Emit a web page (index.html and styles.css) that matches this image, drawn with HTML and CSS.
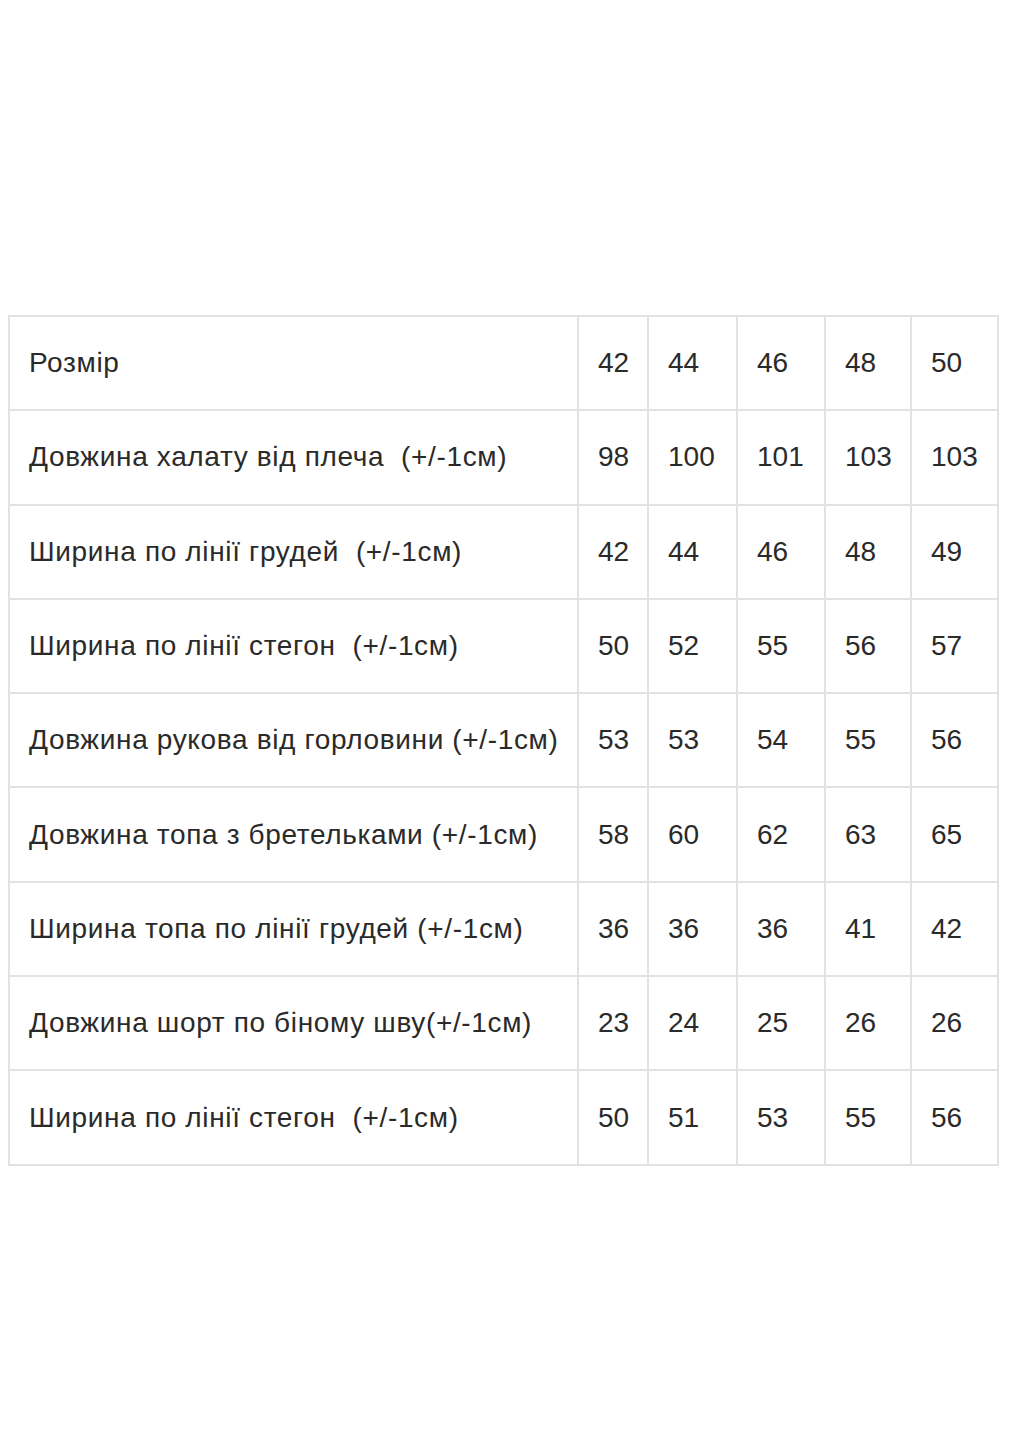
FILE: index.html
```html
<!DOCTYPE html>
<html lang="uk">
<head>
<meta charset="utf-8">
<link rel="stylesheet" href="styles.css">
</head>
<body>
<div class="page">
  <table class="sizes">
    <colgroup>
      <col class="c-label"><col class="c1"><col class="c2"><col class="c3"><col class="c4"><col class="c5">
    </colgroup>
    <tbody>
      <tr><td class="label">Розмір</td><td>42</td><td>44</td><td>46</td><td>48</td><td>50</td></tr>
      <tr><td class="label">Довжина халату від плеча&nbsp; (+/-1см)</td><td>98</td><td>100</td><td>101</td><td>103</td><td>103</td></tr>
      <tr><td class="label">Ширина по лінії грудей&nbsp; (+/-1см)</td><td>42</td><td>44</td><td>46</td><td>48</td><td>49</td></tr>
      <tr><td class="label">Ширина по лінії стегон&nbsp; (+/-1см)</td><td>50</td><td>52</td><td>55</td><td>56</td><td>57</td></tr>
      <tr><td class="label">Довжина рукова від горловини (+/-1см)</td><td>53</td><td>53</td><td>54</td><td>55</td><td>56</td></tr>
      <tr><td class="label">Довжина топа з бретельками (+/-1см)</td><td>58</td><td>60</td><td>62</td><td>63</td><td>65</td></tr>
      <tr><td class="label">Ширина топа по лінії грудей (+/-1см)</td><td>36</td><td>36</td><td>36</td><td>41</td><td>42</td></tr>
      <tr><td class="label">Довжина шорт по біному шву(+/-1см)</td><td>23</td><td>24</td><td>25</td><td>26</td><td>26</td></tr>
      <tr><td class="label">Ширина по лінії стегон&nbsp; (+/-1см)</td><td>50</td><td>51</td><td>53</td><td>55</td><td>56</td></tr>
    </tbody>
  </table>
</div>
</body>
</html>
```
FILE: styles.css
```css
html, body {
  margin: 0;
  padding: 0;
  background: #ffffff;
}

.page {
  padding: 315px 0 0 8px;
}

.sizes {
  border-collapse: separate;
  border-spacing: 0;
  table-layout: fixed;
  width: 989px;
  border-left: 2px solid #e2e2e2;
  border-top: 2px solid #e2e2e2;
  font-family: "Liberation Sans", Arial, sans-serif;
  font-size: 28px;
  color: #2a2a2a;
}

.c-label { width: 569px; }
.c1 { width: 70px; }
.c2 { width: 89px; }
.c3 { width: 88px; }
.c4 { width: 86px; }
.c5 { width: 87px; }

.sizes td {
  box-sizing: border-box;
  height: 94.3px;
  padding: 0 0 0 19px;
  border-right: 2px solid #e2e2e2;
  border-bottom: 2px solid #e2e2e2;
  vertical-align: middle;
  white-space: nowrap;
  text-align: left;
}

.sizes td.label {
  letter-spacing: 0.65px;
}
```
